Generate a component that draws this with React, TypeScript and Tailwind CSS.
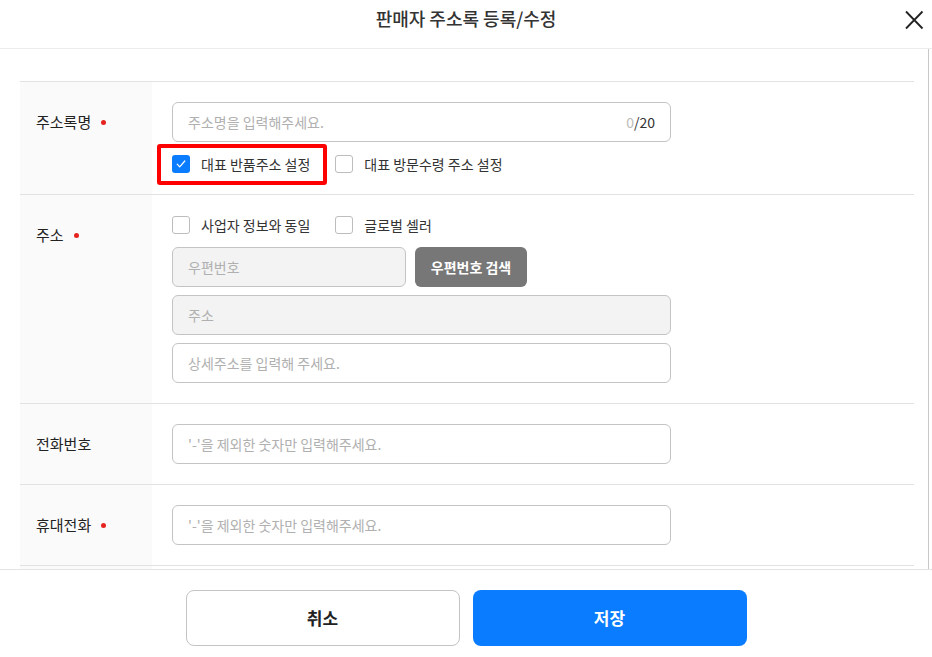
import React from 'react'

const font = { fontFamily: '"Noto Sans CJK KR", "Noto Sans", sans-serif' }

function Checkbox({ checked, label }: { checked?: boolean; label: string }) {
  return (
    <label className="flex items-center gap-[11px] h-5 text-[14px] text-[#333] leading-5">
      <span
        className={
          checked
            ? 'w-[18px] h-[18px] rounded-[3px] bg-[#0a7cff] flex items-center justify-center'
            : 'w-[18px] h-[18px] rounded-[3px] border border-[#bdbdbd] bg-white'
        }
      >
        {checked && (
          <svg width="12" height="12" viewBox="0 0 12 12" fill="none">
            <path d="M2.2 6.2l2.5 2.7L9.8 3" stroke="white" strokeWidth="1.2" strokeLinecap="round" strokeLinejoin="round" />
          </svg>
        )}
      </span>
      {label}
    </label>
  )
}

function Field({ placeholder, disabled, className = 'w-[499px]', children }: { placeholder: string; disabled?: boolean; className?: string; children?: React.ReactNode }) {
  return (
    <div
      className={`${className} h-10 rounded-[6px] border border-[#c4c4c4] flex items-center justify-between px-[15px] text-[14px] leading-5 ${
        disabled ? 'bg-[#f3f3f3]' : 'bg-white'
      }`}
    >
      <span className="text-[#b0b0b0]">{placeholder}</span>
      {children}
    </div>
  )
}

function Row({ label, required, children }: { label: string; required?: boolean; children: React.ReactNode }) {
  return (
    <div className="flex border-b border-[#e2e2e2]">
      <div className="w-[132px] shrink-0 bg-[#fafafa] pl-4 pt-[30px] flex items-start">
        <span className="flex items-center gap-[10px] text-[15px] text-[#222] leading-5">
          {label}
          {required && <span className="w-[5px] h-[5px] rounded-full bg-[#e5231f]" />}
        </span>
      </div>
      <div className="flex-1 pl-5 py-5 flex flex-col">{children}</div>
    </div>
  )
}

export default function App() {
  return (
    <div className="w-[932px] h-[657px] bg-white flex flex-col overflow-hidden" style={font}>
      {/* Header */}
      <div className="h-[49px] shrink-0 border-b border-[#ececec] relative flex justify-center pt-[6px]">
        <h1 className="text-[18px] font-medium text-[#333] leading-6">판매자 주소록 등록/수정</h1>
        <button className="absolute right-[8px] top-[10px] w-5 h-5">
          <svg width="20" height="20" viewBox="0 0 20 20" fill="none">
            <path d="M2 1.5l16.5 17M18.5 1.5L2 18.5" stroke="#222" strokeWidth="1.8" />
          </svg>
        </button>
      </div>

      {/* Body (scrolled area, next row is cut off) */}
      <div className="flex-1 overflow-hidden mr-[3px] border-r border-[#c8c8c8]">
        <div className="mx-5 mt-8 mr-[14px] border-t border-[#e2e2e2]">
          <Row label="주소록명" required>
            <Field placeholder="주소명을 입력해주세요.">
              <span className="text-[14px]">
                <span className="text-[#bbb]">0</span>
                <span className="text-[#333]">/20</span>
              </span>
            </Field>
            <div className="flex gap-[25px] mt-3">
              <div className="relative">
                <Checkbox checked label="대표 반품주소 설정" />
                <div className="absolute left-[-15px] top-[-10px] w-[170px] h-[41px] border-4 border-[#ff0000] rounded-[3px]" />
              </div>
              <Checkbox label="대표 방문수령 주소 설정" />
            </div>
          </Row>

          <Row label="주소" required>
            <div className="flex gap-[25px]">
              <Checkbox label="사업자 정보와 동일" />
              <Checkbox label="글로벌 셀러" />
            </div>
            <div className="flex gap-[9px] mt-3">
              <Field placeholder="우편번호" disabled className="w-[234px]" />
              <button className="w-[112px] h-10 rounded-[6px] bg-[#777] text-white text-[14px] font-bold">우편번호 검색</button>
            </div>
            <div className="mt-2">
              <Field placeholder="주소" disabled />
            </div>
            <div className="mt-2">
              <Field placeholder="상세주소를 입력해 주세요." />
            </div>
          </Row>

          <Row label="전화번호">
            <Field placeholder="'-'을 제외한 숫자만 입력해주세요." />
          </Row>

          <Row label="휴대전화" required>
            <Field placeholder="'-'을 제외한 숫자만 입력해주세요." />
          </Row>

          <div className="flex h-20">
            <div className="w-[132px] bg-[#fafafa]" />
          </div>
        </div>
      </div>

      {/* Footer */}
      <div className="h-[88px] shrink-0 border-t border-[#e4e4e4] flex justify-center gap-[13px] pt-5">
        <button className="w-[274px] h-[56px] rounded-[8px] border border-[#c4c4c4] bg-white text-[17px] font-bold text-[#222] leading-6">취소</button>
        <button className="w-[274px] h-[56px] rounded-[8px] bg-[#0a7cff] text-[17px] font-bold text-white leading-6">저장</button>
      </div>
    </div>
  )
}
